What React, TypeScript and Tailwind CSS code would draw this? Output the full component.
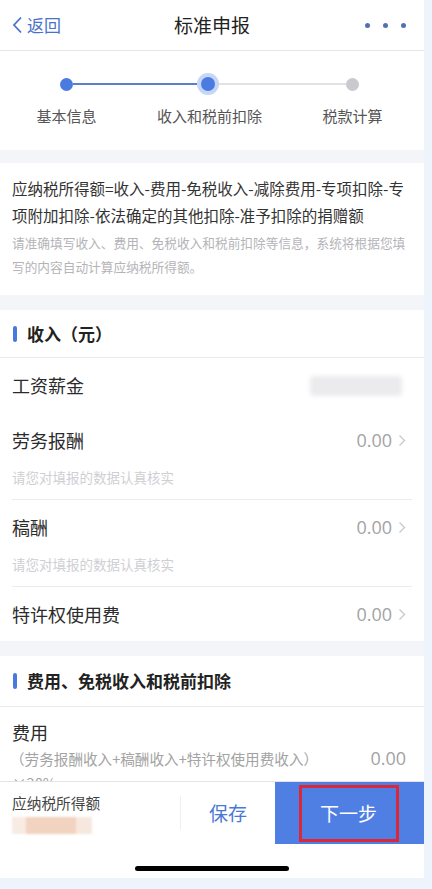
import React from "react";

const font = { fontFamily: '"Noto Sans CJK SC", "Noto Sans", sans-serif' };
const numFont = { fontFamily: '"Open Sans", "Noto Sans", sans-serif' };

function Chevron() {
  return (
    <svg width="8" height="13" viewBox="0 0 8 13" className="ml-[6px]">
      <path d="M1.5 1.5 L6.5 6.5 L1.5 11.5" fill="none" stroke="#c8c8cc" strokeWidth="1.3" />
    </svg>
  );
}

function SectionHeader({ title }: { title: string }) {
  return (
    <div className="flex h-[48px] items-center border-b border-[#ececf0] pl-[13px]">
      <div className="h-[16px] w-[4px] rounded-[2px] bg-[#4a78dc]" />
      <div className="ml-[10px] text-[17px] font-bold text-[#222]">{title}</div>
    </div>
  );
}

function Item({ label, hint, last }: { label: string; hint?: boolean; last?: boolean }) {
  return (
    <div className={last ? "" : "border-b border-[#ececf0]"}>
      <div className="flex h-[54px] items-center justify-between">
        <div className="text-[18px] text-[#2b2b2b]">{label}</div>
        <div className="mr-[6px] flex items-center">
          <span className="text-[18px] text-[#a3a3a3]" style={numFont}>0.00</span>
          <Chevron />
        </div>
      </div>
      {hint && (
        <div className="mt-[1px] mb-[13px] h-[18px] text-[13.5px] leading-[18px] text-[#cfcfd3]">请您对填报的数据认真核实</div>
      )}
    </div>
  );
}

export default function App() {
  return (
    <div className="flex h-[889px] w-[432px] flex-col overflow-hidden bg-[#eef4fb]" style={font}>
      <div className="flex h-[878px] w-[432px]">
        <div className="flex h-full w-[424px] flex-col bg-white">
          {/* Header */}
          <div className="relative flex h-[51px] shrink-0 items-center justify-center border-b border-[#e6e6ea]">
            <div className="absolute left-[12px] top-0 flex h-full items-center text-[#4a72c8]">
              <svg width="11" height="18" viewBox="0 0 11 18">
                <path d="M9 1.5 L2 9 L9 16.5" fill="none" stroke="#4a72c8" strokeWidth="1.8" />
              </svg>
              <span className="ml-[4px] text-[17px]">返回</span>
            </div>
            <div className="text-[19px] font-normal text-[#222]">标准申报</div>
            <div className="absolute right-[18px] top-0 flex h-full items-center gap-[13px]">
              <div className="h-[5px] w-[5px] rounded-full bg-[#5470b4]" />
              <div className="h-[5px] w-[5px] rounded-full bg-[#5470b4]" />
              <div className="h-[5px] w-[5px] rounded-full bg-[#5470b4]" />
            </div>
          </div>

          {/* Steps */}
          <div className="h-[99px] shrink-0 bg-white pt-[22px]">
            <div className="flex h-[22px] items-center pl-[60px]">
              <div className="h-[13px] w-[13px] rounded-full bg-[#4a7be0]" />
              <div className="h-[2px] w-[124px] bg-[#5b7fcc]" />
              <div className="flex h-[22px] w-[22px] items-center justify-center rounded-full bg-[#c5d6f6]">
                <div className="h-[14px] w-[14px] rounded-full bg-[#4a7be0]" />
              </div>
              <div className="h-[2px] w-[127px] bg-[#e2e2e6]" />
              <div className="h-[13px] w-[13px] rounded-full bg-[#c9c9ce]" />
            </div>
            <div className="-ml-[5px] mt-[10px] grid grid-cols-[143px_143px_143px] text-center text-[15px] text-[#555]">
              <div>基本信息</div>
              <div>收入和税前扣除</div>
              <div>税款计算</div>
            </div>
          </div>

          <div className="h-[13px] shrink-0 bg-[#f4f5f9]" />

          {/* Scroll area */}
          <div className="min-h-0 flex-1 overflow-hidden">
            <div className="h-[132px] bg-white px-[12px] pt-[12px]">
              <div className="whitespace-nowrap text-[15.5px] leading-[27px] text-[#333]">
                应纳税所得额=收入-费用-免税收入-减除费用-专项扣除-专
                <br />
                项附加扣除-依法确定的其他扣除-准予扣除的捐赠额
              </div>
              <div className="mt-[2px] whitespace-nowrap text-[12.7px] leading-[24px] text-[#b4b4b8]">
                请准确填写收入、费用、免税收入和税前扣除等信息，系统将根据您填
                <br />
                写的内容自动计算应纳税所得额。
              </div>
            </div>

            <div className="h-[15px] bg-[#f4f5f9]" />

            <div className="bg-white">
              <SectionHeader title="收入（元）" />
              <div className="px-[12px]">
                <div className="flex h-[55px] items-center justify-between">
                  <div className="text-[18px] text-[#2b2b2b]">工资薪金</div>
                  <div className="mr-[10px] h-[20px] w-[92px] rounded-[4px] bg-[#ebebee] blur-[2px]" />
                </div>
                <Item label="劳务报酬" hint />
                <Item label="稿酬" hint />
                <Item label="特许权使用费" last />
              </div>
            </div>

            <div className="h-[15px] bg-[#f4f5f9]" />

            <div className="bg-white">
              <div className="flex h-[51px] items-center border-b border-[#ececf0] pl-[13px]">
                <div className="h-[16px] w-[4px] rounded-[2px] bg-[#4a78dc]" />
                <div className="ml-[10px] text-[17px] font-bold text-[#222]">费用、免税收入和税前扣除</div>
              </div>
              <div className="px-[12px] pt-[12px]">
                <div className="text-[18px] leading-[26px] text-[#2b2b2b]">费用</div>
                <div className="flex items-center justify-between">
                  <div className="-ml-[2px] text-[14.6px] leading-[22px] text-[#a3a3a3]">（劳务报酬收入+稿酬收入+特许权使用费收入）</div>
                  <div className="mr-[6px] text-[18px] text-[#a3a3a3]" style={numFont}>0.00</div>
                </div>
                <div className="text-[14.6px] leading-[22px] text-[#a3a3a3]">×20%</div>
              </div>
            </div>
          </div>

          {/* Bottom bar */}
          <div className="flex h-[63px] shrink-0 border-t border-[#e3e3e8] bg-white">
            <div className="flex w-[180px] flex-col justify-center pl-[12px]">
              <div className="text-[14.7px] leading-[20px] text-[#444]">应纳税所得额</div>
              <div className="mt-[4px] flex h-[17px] w-[80px] blur-[1px]">
                <div className="h-full w-[14px] bg-[#f8ebe3]" />
                <div className="h-full w-[50px] bg-[#f1d3c0]" />
                <div className="h-full w-[16px] bg-[#f7e8df]" />
              </div>
            </div>
            <div className="my-[14px] w-px bg-[#efeff2]" />
            <div className="flex w-[94px] items-center justify-center text-[19px] text-[#4a78d6]">保存</div>
            <div className="flex flex-1 items-center justify-center bg-[#4f7fe3] pr-[2px]">
              <div className="flex h-[57px] w-[100px] items-center justify-center border-[3.5px] border-[#d8283a] text-[19px] text-white">
                下一步
              </div>
            </div>
          </div>

          {/* Home indicator */}
          <div className="flex h-[34px] shrink-0 justify-center bg-white pt-[22px]">
            <div className="h-[5px] w-[154px] rounded-full bg-black" />
          </div>
        </div>
        <div className="flex-1 bg-[#eef4fb]" />
      </div>
    </div>
  );
}
